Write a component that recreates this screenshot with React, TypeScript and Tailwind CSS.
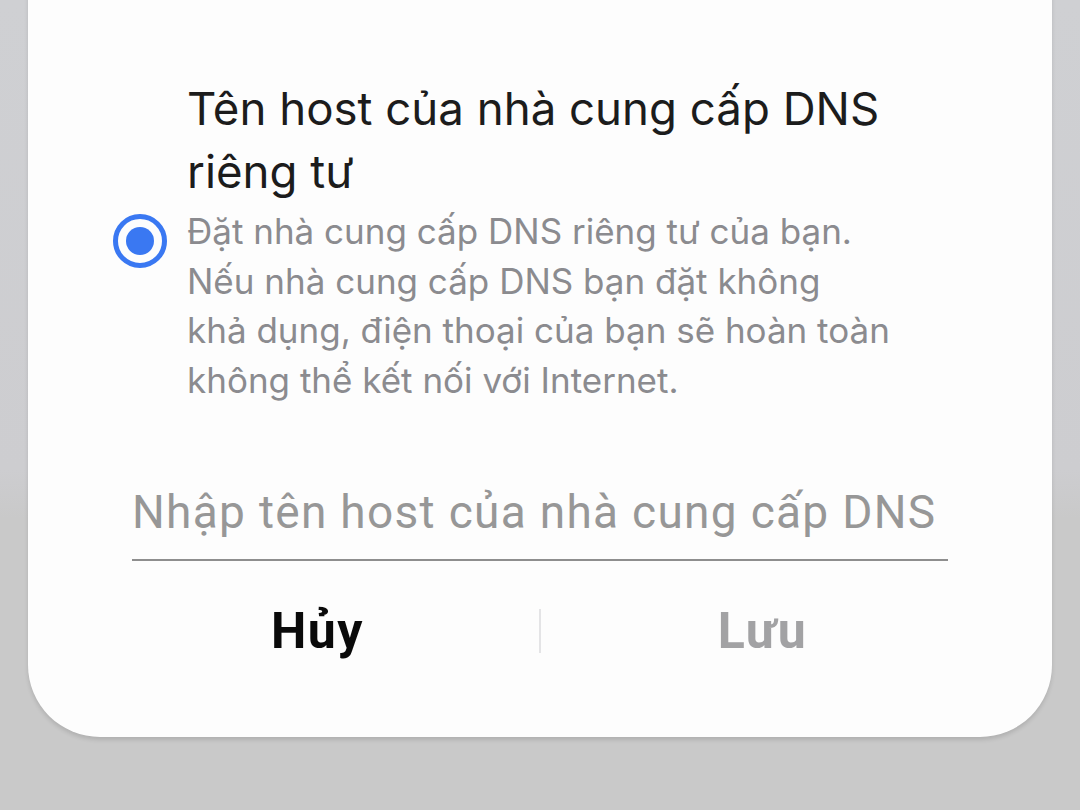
import { useState } from "react";

// Private DNS dialog (bottom part of the sheet, top runs off-screen)
export default function App() {
  const [host, setHost] = useState("");

  return (
    <div className="w-[1080px] h-[810px] overflow-hidden bg-[linear-gradient(180deg,#cfd0d3_0%,#cdcdd0_58%,#c9c9c9_64%,#c9c9c9_100%)] flex flex-col">
      <div className="mx-[28px] -mt-[120px] h-[857px] shrink-0 bg-[#fdfdfd] rounded-[72px] shadow-[0_3px_4px_rgba(0,0,0,0.12)] flex flex-col font-['Inter',sans-serif]">
        {/* option row */}
        <div className="flex items-center mt-[197px] pl-[85px] pr-[40px]">
          <div className="w-[54px] h-[54px] rounded-full border-[5px] border-[#3a78f2] flex items-center justify-center shrink-0">
            <div className="w-[28px] h-[28px] rounded-full bg-[#3a78f2]" />
          </div>
          <div className="ml-[20px] flex flex-col">
            <p className="text-[45.6px] leading-[63px] text-[#1c1c1c]">
              Tên host của nhà cung cấp DNS
              <br />
              riêng tư
            </p>
            <p className="mt-[4px] text-[35px] leading-[49.5px] text-[#8b8b8f]">
              Đặt nhà cung cấp DNS riêng tư của bạn.
              <br />
              Nếu nhà cung cấp DNS bạn đặt không
              <br />
              khả dụng, điện thoại của bạn sẽ hoàn toàn
              <br />
              không thể kết nối với Internet.
            </p>
          </div>
        </div>

        {/* host input */}
        <div className="mt-[80px] px-[104px]">
          <input
            value={host}
            onChange={(e) => setHost(e.target.value)}
            placeholder="Nhập tên host của nhà cung cấp DNS"
            className="w-full h-[76px] pb-[20px] bg-transparent outline-none border-b-2 border-[#8e8e8e] text-[46px] tracking-[1.3px] text-[#1c1c1c] placeholder:text-[#979797] font-['Roboto',sans-serif]"
          />
        </div>

        {/* actions */}
        <div className="mt-[30px] mx-[68px] flex items-center font-['Roboto',sans-serif] font-bold text-[50px] tracking-[1.5px]">
          <button className="flex-1 h-[80px] text-[#0a0a0a]">Hủy</button>
          <div className="w-[2px] h-[44px] bg-[#e4e4e6]" />
          <button className="flex-1 h-[80px] text-[#a2a2a4]">Lưu</button>
        </div>
      </div>
    </div>
  );
}
